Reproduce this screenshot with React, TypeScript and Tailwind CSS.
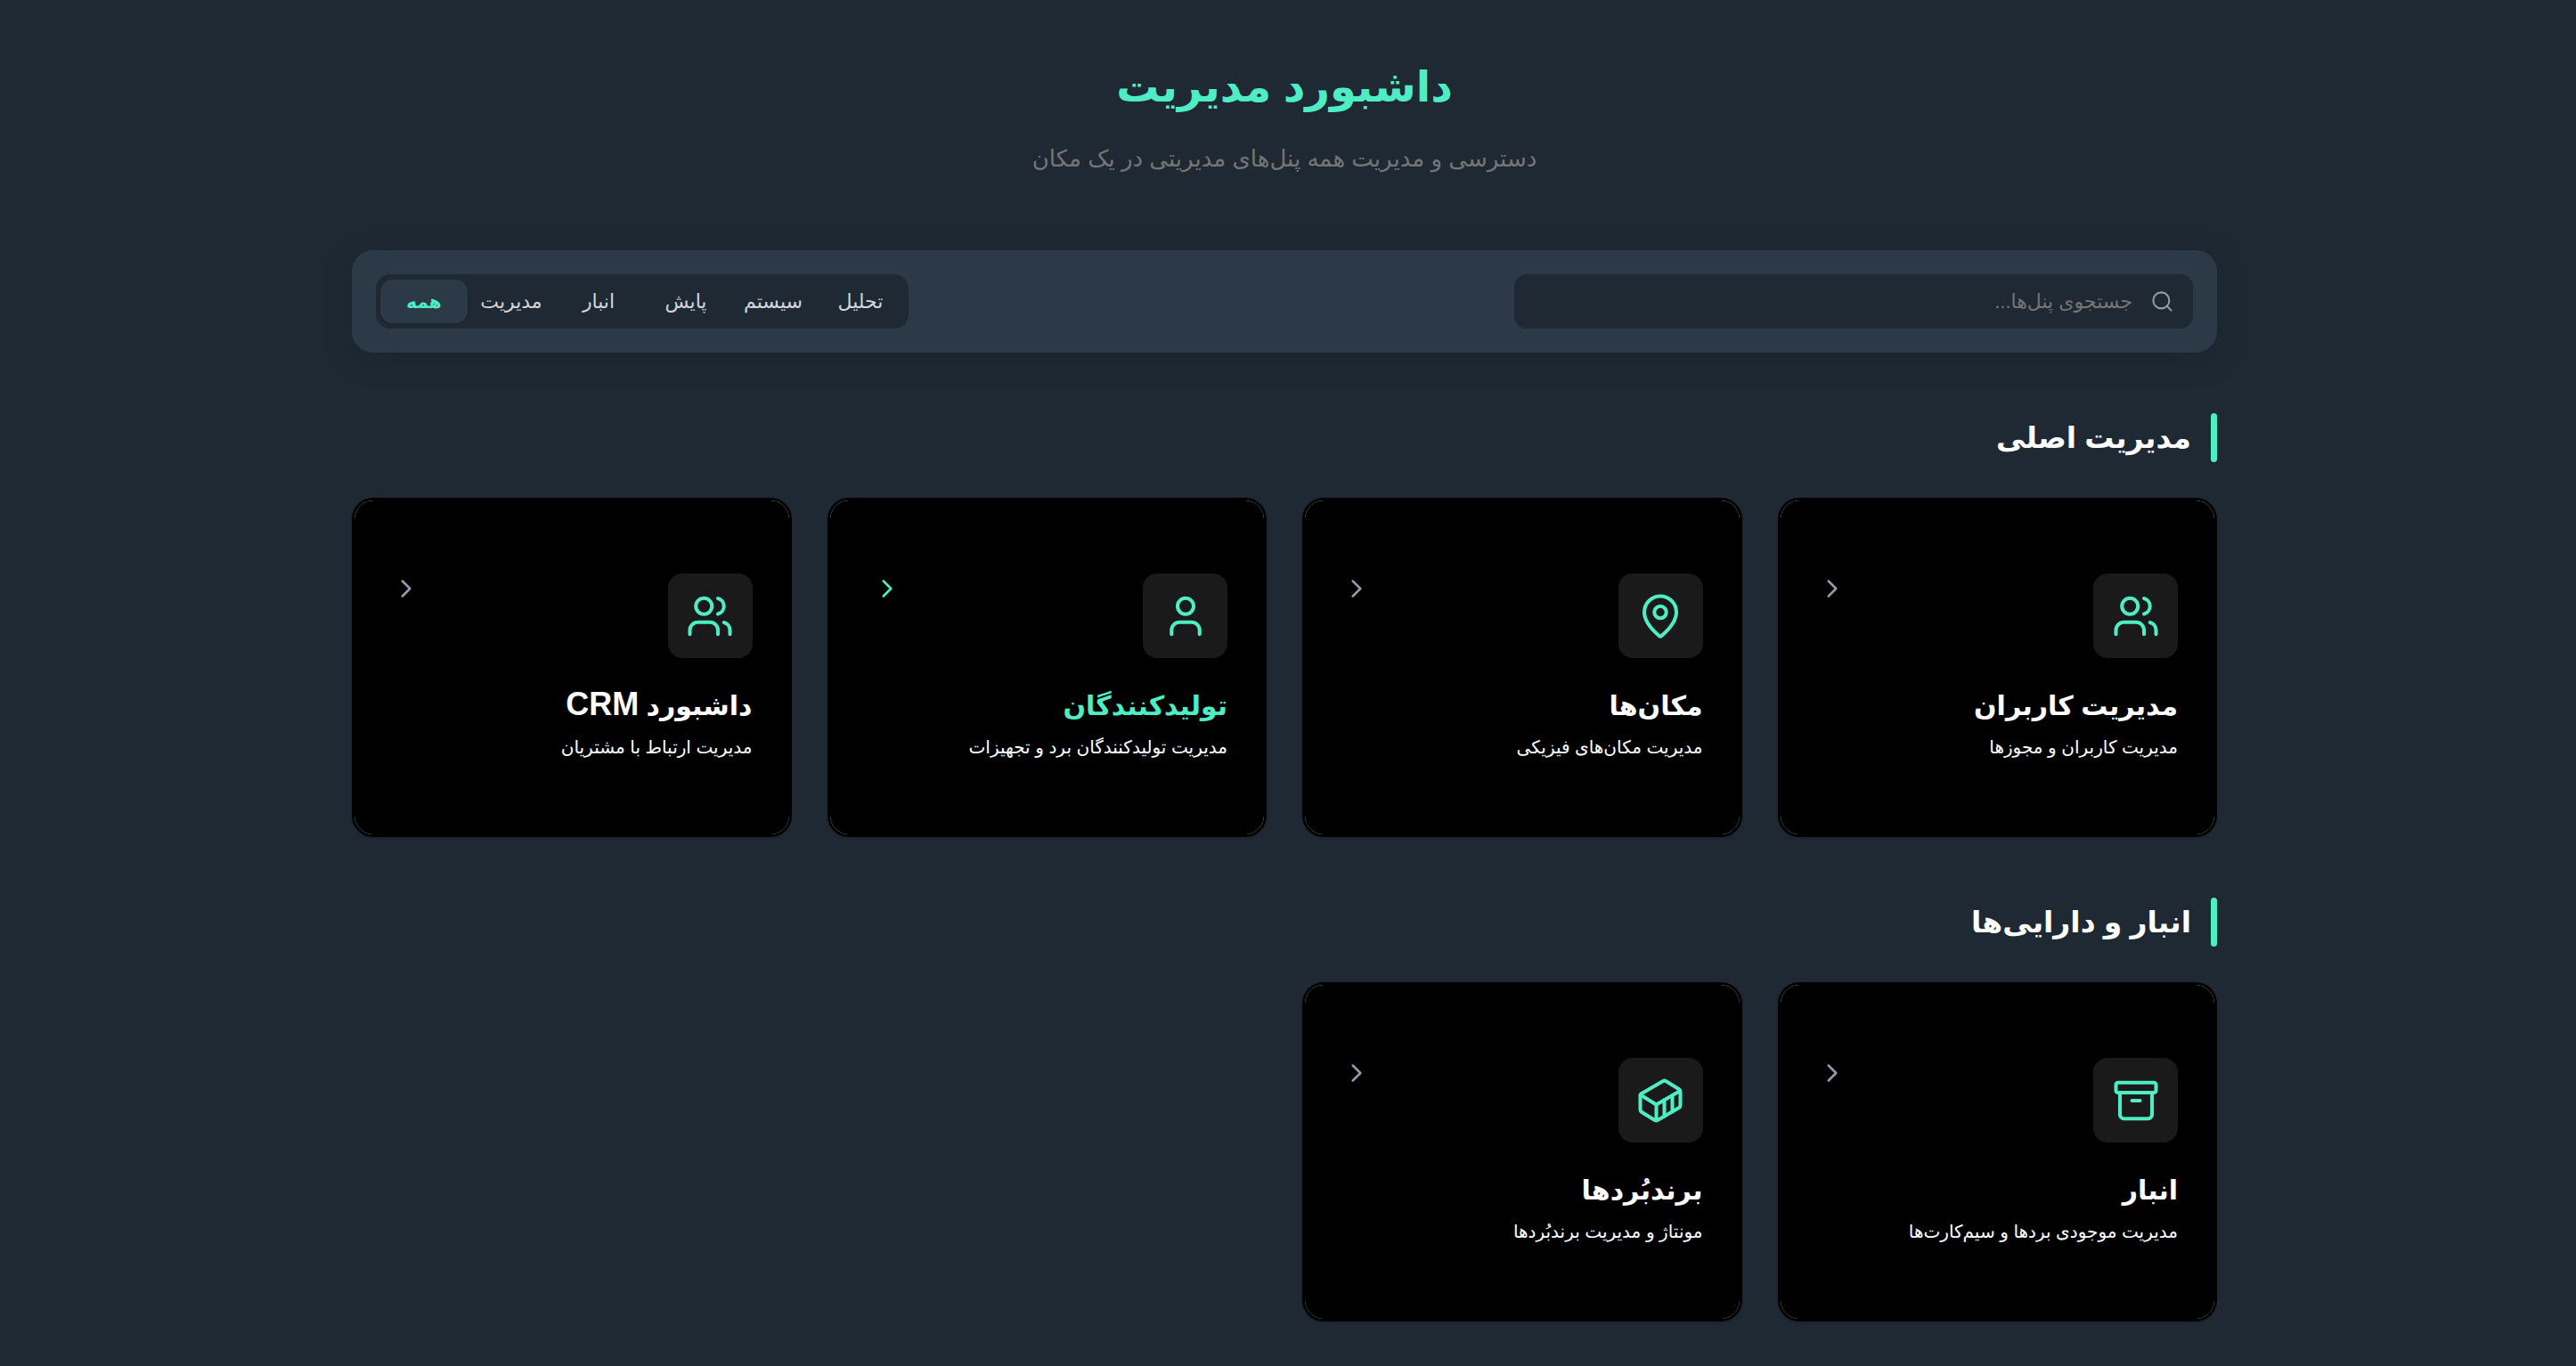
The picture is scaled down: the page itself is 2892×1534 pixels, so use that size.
import { useState, type ReactNode } from "react";
import { Archive, ChevronRight, Container, MapPin, Search, User, Users, type LucideIcon } from "lucide-react";

type Panel = { id: string; title: ReactNode; text: string; icon: LucideIcon; active?: boolean };

const sections: { title: string; panels: Panel[] }[] = [
  {
    title: "مدیریت اصلی",
    panels: [
      { id: "users", title: "مدیریت کاربران", text: "مدیریت کاربران و مجوزها", icon: Users },
      { id: "places", title: "مکان‌ها", text: "مدیریت مکان‌های فیزیکی", icon: MapPin },
      {
        id: "makers",
        title: "تولیدکنندگان",
        text: "مدیریت تولیدکنندگان برد و تجهیزات",
        icon: User,
        active: true,
      },
      {
        id: "crm",
        title: (
          <>
            داشبورد <span className="text-[36px] leading-none">CRM</span>
          </>
        ),
        text: "مدیریت ارتباط با مشتریان",
        icon: Users,
      },
    ],
  },
  {
    title: "انبار و دارایی‌ها",
    panels: [
      { id: "stock", title: "انبار", text: "مدیریت موجودی بردها و سیم‌کارت‌ها", icon: Archive },
      { id: "boards", title: "برندبُردها", text: "مونتاژ و مدیریت برندبُردها", icon: Container },
    ],
  },
];

const tabs = ["تحلیل", "سیستم", "پایش", "انبار", "مدیریت", "همه"];

function PanelCard({ title, text, icon: Icon, active }: Panel) {
  return (
    <a href="#" className="block rounded-3xl bg-black p-[3px] shadow-sm">
      <div className="relative rounded-[21px] bg-white">
        <div className="absolute inset-0 rounded-[21px] bg-black" />
        <div className="relative px-[41px] py-[82px]">
          <div className="flex items-start justify-between">
            <span className="flex size-[95px] items-center justify-center rounded-2xl bg-[#1a1a1a] text-[#4eedc4]">
              <Icon size={54} strokeWidth={1.8} />
            </span>
            <ChevronRight
              size={34}
              strokeWidth={1.8}
              className={active ? "translate-x-1.5 text-[#4eedc4]" : "text-[#949bab]"}
            />
          </div>
          <h3
            className={
              active
                ? "mt-8 text-[30px] leading-[44px] font-bold whitespace-nowrap text-[#4eedc4]"
                : "mt-8 text-[30px] leading-[44px] font-bold whitespace-nowrap text-white"
            }
          >
            {title}
          </h3>
          <p className="mt-2 text-[20px] leading-8 whitespace-nowrap text-white">{text}</p>
        </div>
      </div>
    </a>
  );
}

export default function App() {
  const [tab, setTab] = useState("همه");
  return (
    <div
      dir="rtl"
      className="min-h-screen bg-[#1f2933] pt-[60px] pr-4 pb-[51px] pl-2 font-['Liberation_Sans','DejaVu_Sans',sans-serif]"
    >
      <main className="mx-auto max-w-[2094px]">
        <header className="text-center">
          <h1 className="text-[48px] leading-[76px] font-bold text-[#4eedc4]">داشبورد مدیریت</h1>
          <p className="mt-6 text-[26px] leading-9 text-[#757575]">
            دسترسی و مدیریت همه پنل‌های مدیریتی در یک مکان
          </p>
        </header>

        <div className="mt-[85px] flex items-center justify-between rounded-3xl bg-[#2c3a47] p-[27px] shadow-[0_8px_28px_rgba(20,36,44,0.6)]">
          <div className="relative w-[762px]">
            <Search
              size={27}
              strokeWidth={1.8}
              className="absolute top-[17px] right-[21px] text-[#949bab]"
            />
            <input
              type="text"
              aria-label="جستجوی پنل‌ها"
              placeholder="جستجوی پنل‌ها..."
              className="block h-[61px] w-full rounded-[14px] bg-[#1f2933] pr-[68px] pl-6 text-[22px] text-white outline-none placeholder:text-[#757575]"
            />
          </div>
          <div role="tablist" className="flex h-[61px] items-center rounded-2xl bg-[#1f2933] px-[5px]">
            {tabs.map((name) => (
              <button
                key={name}
                type="button"
                role="tab"
                aria-selected={name === tab}
                onClick={() => setTab(name)}
                className={
                  name === tab
                    ? "h-[49px] w-[98px] rounded-[14px] bg-[#2c3a47] text-[20px] font-bold text-[#4eedc4] shadow-sm"
                    : "h-[49px] w-[98px] rounded-[14px] text-[22px] text-[#d1d5db]"
                }
              >
                {name}
              </button>
            ))}
          </div>
        </div>

        {sections.map((section) => (
          <section key={section.title} className="mt-[68px]">
            <h2 className="flex items-center gap-[22px] text-[33px] leading-[55px] font-bold text-white">
              <span className="h-[55px] w-[7px] rounded-full bg-[#4eedc4]" />
              {section.title}
            </h2>
            <div className="mt-10 grid grid-cols-4 gap-10">
              {section.panels.map((panel) => (
                <PanelCard key={panel.id} {...panel} />
              ))}
            </div>
          </section>
        ))}
      </main>
    </div>
  );
}
